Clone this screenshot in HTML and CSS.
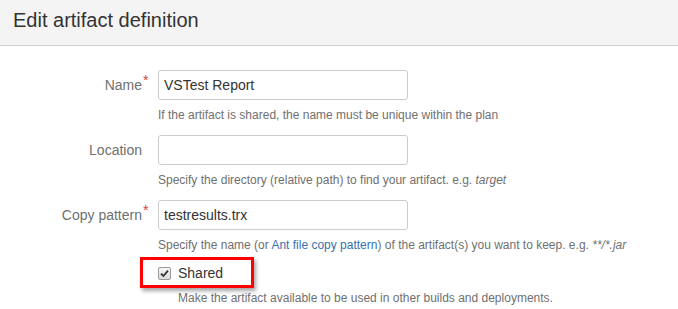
FILE: index.html
```html
<!DOCTYPE html>
<html lang="en">
<head>
  <meta charset="UTF-8" />
  <title>Edit artifact definition</title>
  <link rel="stylesheet" href="styles.css">
</head>
<body>
  <header class="page-header">
    <h1>Edit artifact definition</h1>
  </header>

  <form class="artifact-form">
    <div class="field">
      <label class="field-label" for="name">Name<span class="req">*</span></label>
      <div class="field-body">
        <input class="text" id="name" type="text" value="VSTest Report">
        <div class="desc">If the artifact is shared, the name must be unique within the plan</div>
      </div>
    </div>

    <div class="field">
      <label class="field-label" for="location">Location</label>
      <div class="field-body">
        <input class="text" id="location" type="text" value="">
        <div class="desc">Specify the directory (relative path) to find your artifact. e.g. <em>target</em></div>
      </div>
    </div>

    <div class="field">
      <label class="field-label" for="pattern">Copy pattern<span class="req">*</span></label>
      <div class="field-body">
        <input class="text" id="pattern" type="text" value="testresults.trx">
        <div class="desc wide">Specify the name (or <a href="#">Ant file copy pattern</a>) of the artifact(s) you want to keep. e.g. <em>**/*.jar</em></div>
      </div>
    </div>

    <div class="field check-field">
      <div class="field-body">
        <label class="check">
          <span class="box">
            <svg width="9" height="9" viewBox="0 0 9 9"><path d="M1 4.6 L3.4 7 L8 1.6" fill="none" stroke="#333" stroke-width="1.8"/></svg>
          </span>Shared
        </label>
        <div class="desc wide">Make the artifact available to be used in other builds and deployments.</div>
        <span class="highlight"></span>
      </div>
    </div>
  </form>
</body>
</html>
```

FILE: styles.css
```css
* { box-sizing: border-box; }

body {
  margin: 0;
  font-family: "Liberation Sans", Arial, sans-serif;
  color: #333;
  background: #fff;
  overflow: hidden;
}

.page-header {
  height: 46px;
  padding: 0 0 5px 13px;
  background: #f4f4f4;
  border-bottom: 1px solid #ccc;
}
.page-header h1 {
  margin: 0;
  font-size: 20px;
  font-weight: normal;
  line-height: 40px;
  color: #333;
}

.artifact-form { padding-top: 24px; }

.field {
  display: grid;
  grid-template-columns: 142px 250px;
  column-gap: 16px;
  margin-bottom: 12px;
}

.field-label {
  position: relative;
  text-align: right;
  font-size: 14px;
  line-height: 30px;
  color: #707070;
}
.req {
  position: absolute;
  left: calc(100% + 1px);
  top: -5px;
  color: #d04437;
  font-size: 14px;
}

.text {
  display: block;
  width: 250px;
  height: 30px;
  margin: 0;
  padding: 4px 5px;
  border: 1px solid #ccc;
  border-radius: 3px;
  font: 14px "Liberation Sans", Arial, sans-serif;
  color: #333;
}

.desc {
  margin-top: 7px;
  font-size: 12px;
  line-height: 16px;
  color: #707070;
  white-space: nowrap;
}
.desc a { color: #3572b0; text-decoration: none; }

.check-field { grid-template-columns: 250px; padding-left: 158px; }
.check-field .field-body { position: relative; padding-left: 20px; }

.check {
  display: flex;
  align-items: center;
  font-size: 14px;
  line-height: 16px;
  color: #333;
}
.box {
  display: flex;
  align-items: center;
  justify-content: center;
  width: 13px;
  height: 13px;
  margin: 0 7px 0 -20px;
  border: 1px solid #9a9a9a;
  border-radius: 2px;
  background: linear-gradient(#f6f6f6, #dcdcdc);
}
.check-field .desc { margin-top: 9px; }

.highlight {
  position: absolute;
  left: -18px;
  top: -8px;
  width: 114px;
  height: 31px;
  border: 3px solid #f00;
  box-shadow: 2px 3px 4px rgba(0, 0, 0, 0.35);
}
```
